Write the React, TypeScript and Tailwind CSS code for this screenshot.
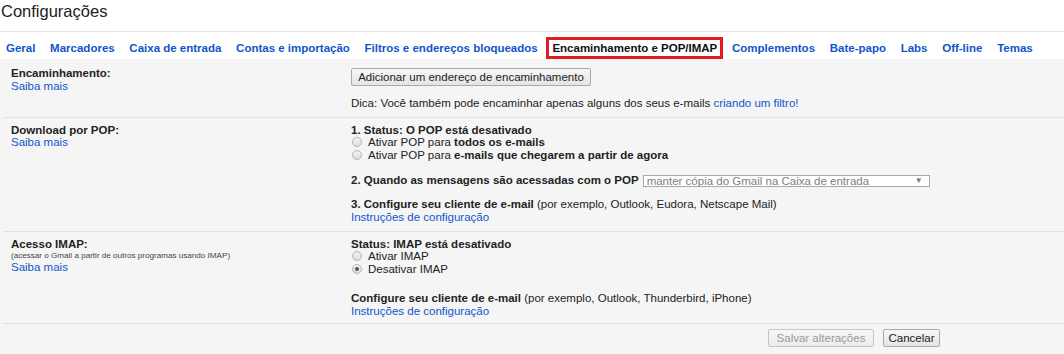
const tabs = [
  "Geral",
  "Marcadores",
  "Caixa de entrada",
  "Contas e importação",
  "Filtros e endereços bloqueados",
  "Encaminhamento e POP/IMAP",
  "Complementos",
  "Bate-papo",
  "Labs",
  "Off-line",
  "Temas",
];

const Radio = ({ checked = false }: { checked?: boolean }) => (
  <span className="ml-px mr-[6px] flex h-[10px] w-[10px] shrink-0 items-center justify-center rounded-full border border-[#b4b4b4] bg-gradient-to-b from-[#f4f4f4] to-[#dcdcdc]">
    {checked && <span className="h-[4px] w-[4px] rounded-full bg-[#555]" />}
  </span>
);

const Link = ({ children }: { children: React.ReactNode }) => (
  <div className="text-[#15c]">{children}</div>
);

export default function App() {
  return (
    <div className="min-h-[354px] w-[1064px] bg-white font-['Liberation_Sans',Arial,sans-serif] text-[11.5px] leading-[12.5px] text-[#222]">
      {/* title */}
      <div className="h-[32px] border-b border-[#e5e5e5] pl-px pt-[2px] text-[16.5px] leading-[18.5px] text-[#222]">
        Configurações
      </div>

      {/* tabs */}
      <div className="mt-[5px] flex items-center gap-[2.7px] text-[11.5px] font-bold">
        {tabs.map((t) => {
          const active = t === "Encaminhamento e POP/IMAP";
          return (
            <span
              key={t}
              className={
                active
                  ? "h-[22px] border-[3px] border-[#e01b22] bg-white px-[3px] leading-[16px] text-[#111]"
                  : "h-[22px] border-[3px] border-transparent px-[3px] leading-[16px] text-[#15c]"
              }
            >
              {t}
            </span>
          );
        })}
      </div>

      {/* content */}
      <div className="bg-[#f5f5f5] pb-[7px]">
        {/* Encaminhamento */}
        <div className="ml-[3px] flex border-b border-[#e2e2e2]">
          <div className="w-[348px] pl-[8px] pt-[8px]">
            <div className="font-bold">Encaminhamento:</div>
            <Link>Saiba mais</Link>
          </div>
          <div className="pt-[9px] pb-[7.5px]">
            <button className="h-[18px] w-[240px] rounded-[2px] border border-[#a9a9a9] bg-gradient-to-b from-[#f7f7f7] to-[#e4e4e4] text-[11.5px] leading-[16px] text-[#222]">
              Adicionar um endereço de encaminhamento
            </button>
            <div className="mt-[10.5px]">
              Dica: Você também pode encaminhar apenas alguns dos seus e-mails{" "}
              <span className="text-[#15c]">criando um filtro!</span>
            </div>
          </div>
        </div>

        {/* POP */}
        <div className="ml-[3px] flex border-b border-[#e2e2e2]">
          <div className="w-[348px] pl-[8px] pt-[6px]">
            <div className="font-bold">Download por POP:</div>
            <Link>Saiba mais</Link>
          </div>
          <div className="pt-[6px] pb-[7.5px]">
            <div className="font-bold">1. Status: O POP está desativado</div>
            <div className="flex items-center">
              <Radio />
              <span>
                Ativar POP para <b>todos os e-mails</b>
              </span>
            </div>
            <div className="flex items-center">
              <Radio />
              <span>
                Ativar POP para <b>e-mails que chegarem a partir de agora</b>
              </span>
            </div>
            <div className="mt-[13px] flex h-[13px] items-center">
              <span className="font-bold">
                2. Quando as mensagens são acessadas com o POP
              </span>
              <span className="ml-[4px] flex h-[12px] w-[287px] items-center justify-between border border-[#a9a9a9] bg-white pl-[3px] pr-[6px] leading-[10px] text-[#808080]">
                manter cópia do Gmail na Caixa de entrada
                <span className="text-[8px] text-[#7a7a7a]">▼</span>
              </span>
            </div>
            <div className="mt-[11px]">
              <b>3. Configure seu cliente de e-mail</b> (por exemplo, Outlook,
              Eudora, Netscape Mail)
            </div>
            <Link>Instruções de configuração</Link>
          </div>
        </div>

        {/* IMAP */}
        <div className="ml-[3px] flex border-b border-[#e2e2e2]">
          <div className="w-[348px] pl-[8px] pt-[6.5px]">
            <div className="font-bold">Acesso IMAP:</div>
            <div className="text-[8.1px] leading-[10px] text-[#444]">
              (acessar o Gmail a partir de outros programas usando IMAP)
            </div>
            <Link>Saiba mais</Link>
          </div>
          <div className="pt-[6.5px] pb-[6px]">
            <div className="font-bold">Status: IMAP está desativado</div>
            <div className="-mt-px flex items-center">
              <Radio />
              <span>Ativar IMAP</span>
            </div>
            <div className="mt-[1px] flex items-center">
              <Radio checked />
              <span>Desativar IMAP</span>
            </div>
            <div className="mt-[16.5px]">
              <b>Configure seu cliente de e-mail</b> (por exemplo, Outlook,
              Thunderbird, iPhone)
            </div>
            <Link>Instruções de configuração</Link>
          </div>
        </div>

        {/* actions */}
        <div className="mt-[5px] flex justify-end gap-[9px] pr-[124px]">
          <button className="h-[18px] w-[106px] rounded-[2px] border border-[#c6c6c6] bg-gradient-to-b from-[#f7f7f7] to-[#ececec] text-[11.5px] leading-[16px] text-[#9a9a9a]">
            Salvar alterações
          </button>
          <button className="h-[18px] w-[57px] rounded-[2px] border border-[#a9a9a9] bg-gradient-to-b from-[#f7f7f7] to-[#e4e4e4] text-[11.5px] leading-[16px] text-[#222]">
            Cancelar
          </button>
        </div>
      </div>
    </div>
  );
}
